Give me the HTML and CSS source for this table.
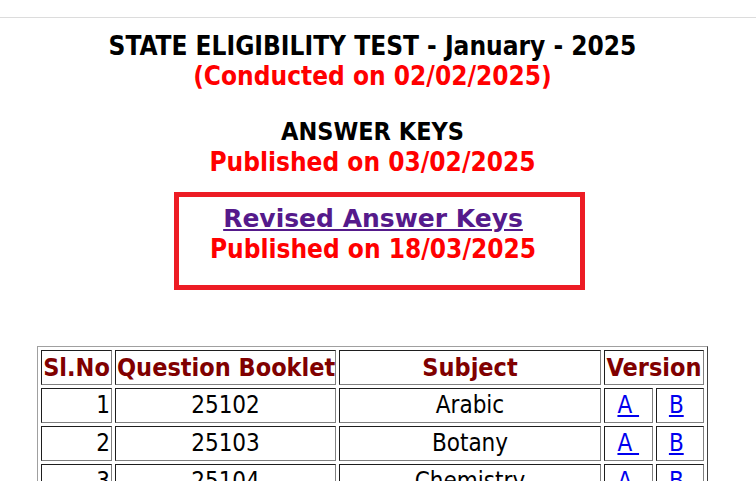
FILE: index.html
```html
<!DOCTYPE html>
<html lang="en">
<head>
<meta charset="utf-8">
<title>SET January 2025 - Answer Keys</title>
<link rel="stylesheet" href="styles.css">
</head>
<body>
<div class="topbar"></div>
<main class="page">
  <h1 class="title">
    <span class="line">STATE ELIGIBILITY TEST - January - 2025</span>
    <span class="line red">(Conducted on 02/02/2025)</span>
  </h1>
  <h2 class="keys">
    <span class="line">ANSWER KEYS</span>
    <span class="line red pub">Published on 03/02/2025</span>
  </h2>
  <div class="box">
    <span class="line"><a href="#" class="revised">Revised Answer Keys</a></span>
    <span class="line red pub">Published on 18/03/2025</span>
  </div>
  <table class="keytable">
    <thead>
      <tr>
        <th class="c-sl">Sl.No</th>
        <th class="c-qb">Question Booklet</th>
        <th class="c-sub">Subject</th>
        <th class="c-ver" colspan="2">Version</th>
      </tr>
    </thead>
    <tbody>
      <tr>
        <td class="num">1</td><td>25102</td><td>Arabic</td>
        <td><a href="#">A&nbsp;</a></td><td><a href="#">B</a>&nbsp;</td>
      </tr>
      <tr>
        <td class="num">2</td><td>25103</td><td>Botany</td>
        <td><a href="#">A&nbsp;</a></td><td><a href="#">B</a>&nbsp;</td>
      </tr>
      <tr>
        <td class="num">3</td><td>25104</td><td>Chemistry</td>
        <td><a href="#">A&nbsp;</a></td><td><a href="#">B</a>&nbsp;</td>
      </tr>
    </tbody>
  </table>
</main>
</body>
</html>
```
FILE: styles.css
```css
html, body {
  margin: 0;
  padding: 0;
  background: #ffffff;
}

body {
  font-family: "DejaVu Sans Condensed", "DejaVu Sans", sans-serif;
  font-stretch: semi-condensed;
  color: #000000;
}

.topbar {
  height: 17px;
  border-bottom: 1px solid #dcdcdc;
}

.page {
  width: 745px;
  text-align: center;
}

.line {
  display: block;
  height: 30px;
  line-height: 30px;
  white-space: nowrap;
}

.title {
  margin: 13px 0 0 0;
  font-size: 26px;
  font-weight: bold;
}

.red {
  color: #ff0000;
}

.keys {
  margin: 26px 0 0 0;
  font-size: 25px;
  font-weight: bold;
}

.pub {
  font-size: 26px;
}

.box {
  box-sizing: border-box;
  width: 411px;
  height: 98px;
  margin: 15px 0 0 174px;
  padding: 7px 13px 0 0;
  border: 5px solid #ed1c24;
  font-weight: bold;
}

.revised {
  font-family: "DejaVu Sans", sans-serif;
  font-stretch: normal;
  font-size: 25px;
  color: #551a8b;
  text-decoration: underline;
}

.keytable {
  width: 671px;
  margin: 56px auto 0 auto;
  border-collapse: separate;
  border-spacing: 3px;
  table-layout: fixed;
  border-style: solid;
  border-width: 1px;
  border-color: #a0a0a0 #404040 #404040 #a0a0a0;
}

.keytable th,
.keytable td {
  box-sizing: border-box;
  height: 35px;
  padding: 1px;
  line-height: 31px;
  border-style: solid;
  border-width: 1px;
  border-color: #1e1e1e #808080 #808080 #1e1e1e;
  text-align: center;
  white-space: nowrap;
  overflow: hidden;
}

.keytable th {
  font-size: 25px;
  font-weight: bold;
  color: #800000;
}

.keytable td {
  font-size: 24px;
  font-weight: normal;
}

.c-sl { width: 71px; }
.c-qb { width: 221px; }
.c-sub { width: 262px; }
.c-ver { width: 100px; }

.keytable td.num {
  text-align: right;
}

.keytable td a {
  color: #0000ee;
  text-decoration: underline;
}
```
